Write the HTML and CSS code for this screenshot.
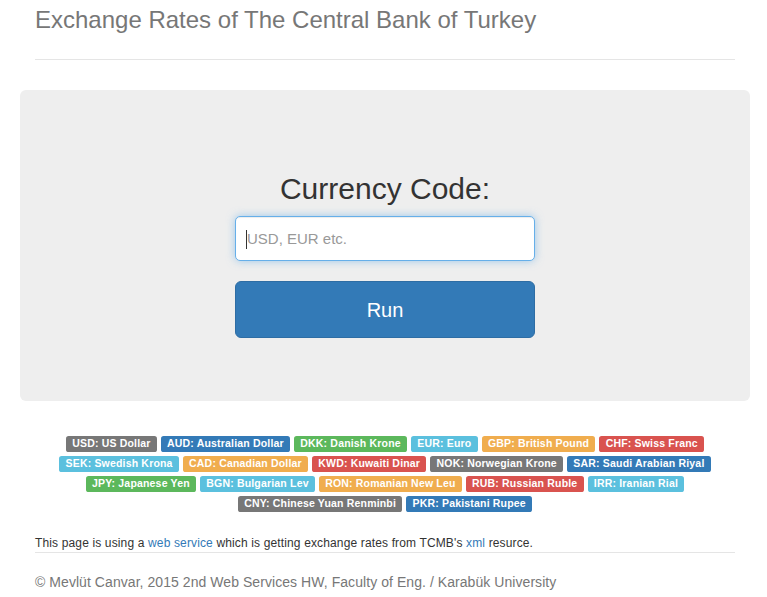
FILE: index.html
```html
<!DOCTYPE html>
<html lang="en">
<head>
<meta charset="utf-8">
<title>Exchange Rates of The Central Bank of Turkey</title>
<link rel="stylesheet" href="styles.css">
</head>
<body>
<div class="container">
  <div class="header">
    <h3 class="title">Exchange Rates of The Central Bank of Turkey</h3>
  </div>

  <div class="jumbotron">
    <h2 class="prompt">Currency Code:</h2>
    <div class="field">
      <input class="code-input" type="text" placeholder="USD, EUR etc.">
      <span class="caret-mark"></span>
    </div>
    <button class="run-btn" type="button">Run</button>
  </div>

  <div class="labels">
    <span class="label l-default">USD: US Dollar</span>
    <span class="label l-primary">AUD: Australian Dollar</span>
    <span class="label l-success">DKK: Danish Krone</span>
    <span class="label l-info">EUR: Euro</span>
    <span class="label l-warning">GBP: British Pound</span>
    <span class="label l-danger">CHF: Swiss Franc</span><br>
    <span class="label l-info">SEK: Swedish Krona</span>
    <span class="label l-warning">CAD: Canadian Dollar</span>
    <span class="label l-danger">KWD: Kuwaiti Dinar</span>
    <span class="label l-default">NOK: Norwegian Krone</span>
    <span class="label l-primary">SAR: Saudi Arabian Riyal</span><br>
    <span class="label l-success">JPY: Japanese Yen</span>
    <span class="label l-info">BGN: Bulgarian Lev</span>
    <span class="label l-warning">RON: Romanian New Leu</span>
    <span class="label l-danger">RUB: Russian Ruble</span>
    <span class="label l-info">IRR: Iranian Rial</span><br>
    <span class="label l-default">CNY: Chinese Yuan Renminbi</span>
    <span class="label l-primary">PKR: Pakistani Rupee</span>
  </div>

  <p class="note">This page is using a <a href="#">web service</a> which is getting exchange rates from TCMB's <a href="#">xml</a> resurce.</p>

  <div class="footer">
    <p>© Mevlüt Canvar, 2015 2nd Web Services HW, Faculty of Eng. / Karabük University</p>
  </div>
</div>
</body>
</html>
```
FILE: styles.css
```css
* { box-sizing: border-box; }

html, body {
  margin: 0;
  padding: 0;
  background: #fff;
}

body {
  font-family: "Liberation Sans", Arial, Helvetica, sans-serif;
  font-size: 14px;
  line-height: 1.42857;
  color: #333;
}

.container {
  width: 700px;
  margin: 0 32px 0 35px;
}

.header {
  padding-bottom: 19px;
  border-bottom: 1px solid #e5e5e5;
}

.title {
  margin: 0;
  font-size: 24px;
  font-weight: normal;
  line-height: 40px;
  color: #777;
}

.jumbotron {
  margin: 30px -15px 0;
  padding: 82px 0 63px;
  background: #eee;
  border-radius: 6px;
  display: flex;
  flex-direction: column;
  align-items: center;
}

.prompt {
  margin: 0 0 11px;
  font-size: 30px;
  font-weight: normal;
  line-height: 33px;
  color: #333;
}

.field {
  position: relative;
  width: 300px;
  height: 45px;
  margin-bottom: 20px;
}

.code-input {
  display: block;
  width: 100%;
  height: 45px;
  padding: 0 11px;
  font-family: "Liberation Sans", Arial, Helvetica, sans-serif;
  font-size: 15px;
  color: #555;
  background: #fff;
  border: 1px solid #66afe9;
  border-radius: 5px;
  outline: 0;
  box-shadow: inset 0 1px 1px rgba(0,0,0,.075), 0 0 8px rgba(102,175,233,.6);
}

.code-input::placeholder {
  color: #999;
  opacity: 1;
}

.caret-mark {
  position: absolute;
  left: 11px;
  top: 14px;
  width: 1px;
  height: 19px;
  background: #333;
}

.run-btn {
  display: block;
  width: 300px;
  height: 57px;
  padding: 1px 0 0;
  font-family: "Liberation Sans", Arial, Helvetica, sans-serif;
  font-size: 20px;
  color: #fff;
  background: #337ab7;
  border: 1px solid #2e6da4;
  border-radius: 6px;
  cursor: pointer;
}

.labels {
  margin-top: 31px;
  text-align: center;
  line-height: 20px;
}

.label {
  display: inline-block;
  padding: .2em .6em .3em;
  font-size: 10.5px;
  font-weight: bold;
  letter-spacing: .18px;
  line-height: 1;
  color: #fff;
  white-space: nowrap;
  vertical-align: baseline;
  border-radius: .25em;
}

.l-default { background: #777; }
.l-primary { background: #337ab7; }
.l-success { background: #5cb85c; }
.l-info    { background: #5bc0de; }
.l-warning { background: #f0ad4e; }
.l-danger  { background: #d9534f; }

.note {
  margin: 23px 0 0;
  font-size: 12px;
  letter-spacing: .14px;
  line-height: 17px;
  color: #333;
}

.note a {
  color: #337ab7;
  text-decoration: none;
}

.footer {
  padding-top: 19px;
  border-top: 1px solid #e5e5e5;
  color: #777;
}

.footer p {
  margin: 0;
  font-size: 14px;
  letter-spacing: .06px;
  line-height: 20px;
}
```
